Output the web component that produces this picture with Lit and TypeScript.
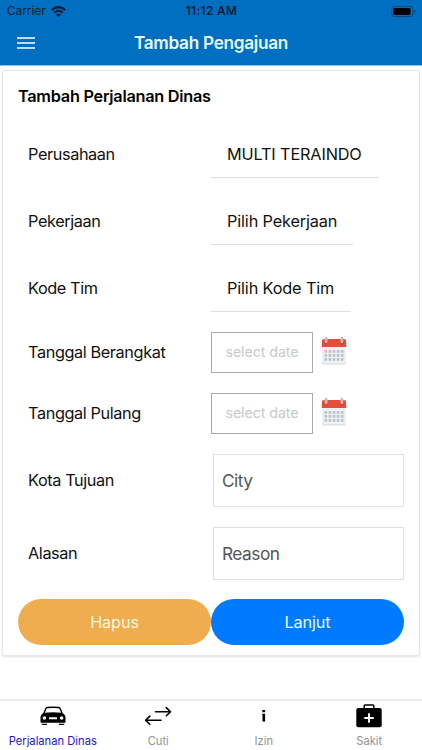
import { LitElement, html, css, svg } from "lit";
import { customElement, property } from "lit/decorators.js";

const calendarIcon = html`<svg class="calendar" width="26" height="30" viewBox="0 0 26 30">
  <path d="M1 10H25V26.5a2 2 0 0 1-2 2H3a2 2 0 0 1-2-2Z" fill="#d3d8db" />
  <path d="M1 10H25V25.5a2 2 0 0 1-2 2H3a2 2 0 0 1-2-2Z" fill="#eef1f3" />
  <path d="M3 3H23a2.2 2.2 0 0 1 2.2 2.2V11H.8V5.200A2.200 2.200 0 0 1 3 3Z" fill="#e64c3c" />
  <circle cx="5" cy="6.500" r="2" fill="#cf4436" />
  <circle cx="21" cy="6.500" r="2" fill="#cf4436" />
  <rect x="3.700" y=".8" width="2.800" height="6.400" rx="1.400" fill="#c3bcbb" />
  <rect x="19.500" y=".8" width="2.800" height="6.400" rx="1.400" fill="#c3bcbb" />
  ${[14, 18, 22].map((y) =>
    [3.5, 7.6, 11.7, 15.8, 19.9].map(
      (x) => svg`<rect x=${x} y=${y} width="2.6" height="2.8" fill="#bcc2c6" />`,
    ),
  )}
</svg>`;

const carIcon = html`<svg width="26" height="20" viewBox="0 0 26 20">
  <path
    fill="#000"
    fill-rule="evenodd"
    d="M7.200.8Q13 .1 18.800.8Q20.200 1 20.900 2.400L22.700 7Q25.500 9 25.500 11V16.200Q25.500 16.800 24.800 16.800H1.200Q.5 16.800.5 16.200V11Q.5 9 3.300 7L5.100 2.400Q5.800 1 7.200.8ZM7.500 2.200Q6.700 2.300 6.300 3.200L4.900 6.700Q13 6 21.100 6.700L19.700 3.200Q19.300 2.300 18.500 2.200Q13 1.600 7.500 2.200ZM4.400 10.200A1.800 1.800 0 1 0 4.400 13.800A1.800 1.800 0 1 0 4.400 10.200ZM21.600 10.200A1.800 1.800 0 1 0 21.600 13.800A1.800 1.800 0 1 0 21.600 10.200ZM9 11.200V13.300H17V11.200Z"
  />
  <path d="M1.500 17.800H7V18.400Q7 19 6.400 19H2.800Q1.700 19 1.500 17.800ZM24.500 17.800H19V18.400Q19 19 19.600 19H23.200Q24.300 19 24.500 17.800Z" />
</svg>`;

const swapIcon = html`<svg width="28" height="20" viewBox="0 0 28 20" fill="none" stroke="#000" stroke-width="1.600" stroke-linecap="round" stroke-linejoin="round">
  <path d="M11.500 5.700H26.300M22.300 1.600L26.500 5.700L22.300 9.800" />
  <path d="M17 14.200H1.800M5.800 10.100L1.600 14.200L5.800 18.300" />
</svg>`;

const infoIcon = html`<svg width="6" height="14" viewBox="0 0 6 14">
  <rect x="1.300" y="1" width="2.800" height="2.200" rx=".4" />
  <path d="M1 4.800H4.100V12.600H1.500V5.700H1Z" />
</svg>`;

const medkitIcon = html`<svg width="26" height="24" viewBox="0 0 26 24">
  <path d="M8.200 5V1.800Q8.200 1 9 1H17Q17.800 1 17.800 1.800V5" fill="none" stroke="#000" stroke-width="1.500" />
  <rect x=".3" y="4" width="25.400" height="19.300" rx="2" />
  <path d="M13 9.300V18.700M8.300 14H17.700" stroke="#fff" stroke-width="1.900" />
</svg>`;

@customElement("form-row")
class FormRow extends LitElement {
  @property() label = "";

  static styles = css`
    :host {
      display: grid;
      grid-template-columns: 183px 1fr;
      align-items: center;
    }
    .label {
      font-size: 16.3px;
      letter-spacing: -0.4px;
      line-height: 20px;
      padding-bottom: 2px;
      color: #111;
    }
  `;

  render() {
    return html`<span class="label">${this.label}</span><slot></slot>`;
  }
}

@customElement("app-root")
class AppRoot extends LitElement {
  static styles = css`
    :host {
      display: flex;
      flex-direction: column;
      height: 750px;
      box-sizing: border-box;
      background: #fff;
      color: #111;
      font-family: Inter, "Liberation Sans", sans-serif;
      overflow: hidden;
    }
    .top {
      background: #006fc1;
      height: 66px;
      border-bottom: 1px solid #8fc4ea;
      box-sizing: border-box;
      flex: none;
    }
    .status {
      height: 21px;
      display: grid;
      grid-template-columns: 1fr auto 1fr;
      align-items: center;
      padding: 1px 6px 0 7px;
      box-sizing: border-box;
      font-size: 11.800px;
      color: #071b2d;
    }
    .carrier {
      display: flex;
      align-items: center;
      gap: 5px;
    }
    .clock {
      font-weight: 600;
      letter-spacing: 0.4px;
    }
    .battery {
      justify-self: end;
      display: block;
    }
    .nav {
      height: 43px;
      display: grid;
      grid-template-columns: 36px 1fr 36px;
      align-items: center;
      padding: 0 0 0 17px;
      margin-right: 17px;
    }
    .menu {
      display: flex;
      flex-direction: column;
      gap: 3px;
      width: 18px;
    }
    .bar {
      height: 2px;
      background: #b9def5;
    }
    .heading {
      color: #e8f8ff;
      font-size: 17.200px;
      font-weight: 600;
      letter-spacing: -0.28px;
      text-align: center;
      white-space: nowrap;
    }
    .card {
      margin: 4px 2px 0;
      height: 586px;
      box-sizing: border-box;
      border: 1px solid #e6e6e6;
      border-radius: 2px;
      box-shadow: 0 1px 2px rgba(0, 0, 0, 0.12);
      padding: 15px 15px 0;
      flex: none;
    }
    .title {
      font-size: 16.300px;
      font-weight: 600;
      letter-spacing: -0.27px;
      line-height: 21px;
      margin: 0 0 24px;
      color: #000;
    }
    .rows {
      display: flex;
      flex-direction: column;
      gap: 20px;
      padding-left: 10px;
    }
    .picker {
      justify-self: start;
      height: 47px;
      line-height: 46px;
      box-sizing: border-box;
      border-bottom: 1px solid #dedede;
      padding: 0 16px;
      font-size: 16.300px;
      letter-spacing: -0.15px;
      white-space: nowrap;
    }
    .company {
      width: 168px;
    }
    .job {
      width: 142px;
    }
    .team {
      width: 140px;
    }
    .date {
      display: flex;
      align-items: center;
      gap: 8px;
    }
    .date-box {
      width: 102px;
      height: 41px;
      box-sizing: border-box;
      border: 1px solid #aaa;
      display: flex;
      align-items: center;
      justify-content: center;
      color: #c9c9cb;
      font-size: 14.300px;
      letter-spacing: -0.1px;
      padding-bottom: 2px;
    }
    .calendar {
      display: block;
      margin-top: -3px;
    }
    .field {
      height: 53px;
      box-sizing: border-box;
      border: 1px solid #e0e0e0;
      margin-left: 2px;
      padding: 0 8px;
      display: flex;
      align-items: center;
      color: #555;
      font-size: 17.300px;
      letter-spacing: -0.5px;
    }
    .actions {
      display: grid;
      grid-template-columns: 1fr 1fr;
      margin-top: 19px;
    }
    .button {
      height: 46px;
      border: 0;
      border-radius: 23px;
      padding: 0;
      font: 400 16.300px Inter, "Liberation Sans", sans-serif;
      letter-spacing: -0.15px;
    }
    .clear {
      background: #efad4f;
      color: #fff8dc;
    }
    .next {
      background: #007bff;
      color: #e8f8ff;
    }
    .tabs {
      margin-top: auto;
      height: 51px;
      box-sizing: border-box;
      border-top: 2px solid #ececec;
      display: grid;
      grid-template-columns: repeat(4, 1fr);
      flex: none;
    }
    .tab {
      display: flex;
      flex-direction: column;
      align-items: center;
      color: #929292;
      font-size: 11.200px;
      line-height: 16px;
      white-space: nowrap;
    }
    .glyph {
      height: 32px;
      padding-bottom: 3px;
      box-sizing: border-box;
      display: flex;
      align-items: center;
      justify-content: center;
    }
    .active {
      color: #2417d0;
    }
  `;

  render() {
    return html`
      <header class="top">
        <div class="status">
          <span class="carrier">
            Carrier
            <svg width="15" height="11" viewBox="0 0 15 11" fill="none" stroke="#071b2d" stroke-width="2">
              <path d="M.8 4Q7.500-1.700 14.200 4M3.300 6.600Q7.500 3.200 11.700 6.600" />
              <path d="M5.100 8.500Q7.500 6.700 9.900 8.500L7.500 10.900Z" fill="#071b2d" stroke="none" />
            </svg>
          </span>
          <span class="clock">11:12 AM</span>
          <svg class="battery" width="25" height="11" viewBox="0 0 25 11">
            <rect x=".6" y=".5" width="21.300" height="10" rx="2.600" fill="none" stroke="#07477b" />
            <rect x="2.200" y="2" width="17.300" height="7" rx="1.300" fill="#000" />
            <path d="M23.200 3.800Q24.400 4.300 24.400 5.500T23.200 7.200Z" fill="#07477b" />
          </svg>
        </div>
        <div class="nav">
          <span class="menu"><i class="bar"></i><i class="bar"></i><i class="bar"></i></span>
          <span class="heading">Tambah Pengajuan</span>
        </div>
      </header>
      <main class="card">
        <h1 class="title">Tambah Perjalanan Dinas</h1>
        <div class="rows">
          <form-row label="Perusahaan"><div class="picker company">MULTI TERAINDO</div></form-row>
          <form-row label="Pekerjaan"><div class="picker job">Pilih Pekerjaan</div></form-row>
          <form-row label="Kode Tim"><div class="picker team">Pilih Kode Tim</div></form-row>
          ${["Tanggal Berangkat", "Tanggal Pulang"].map(
            (label) => html`<form-row label=${label}>
              <div class="date"><div class="date-box">select date</div>${calendarIcon}</div>
            </form-row>`,
          )}
          <form-row label="Kota Tujuan"><div class="field">City</div></form-row>
          <form-row label="Alasan"><div class="field">Reason</div></form-row>
        </div>
        <div class="actions">
          <button class="button clear">Hapus</button>
          <button class="button next">Lanjut</button>
        </div>
      </main>
      <nav class="tabs">
        <div class="tab active"><span class="glyph">${carIcon}</span>Perjalanan Dinas</div>
        <div class="tab"><span class="glyph">${swapIcon}</span>Cuti</div>
        <div class="tab"><span class="glyph">${infoIcon}</span>Izin</div>
        <div class="tab"><span class="glyph">${medkitIcon}</span>Sakit</div>
      </nav>
    `;
  }
}
